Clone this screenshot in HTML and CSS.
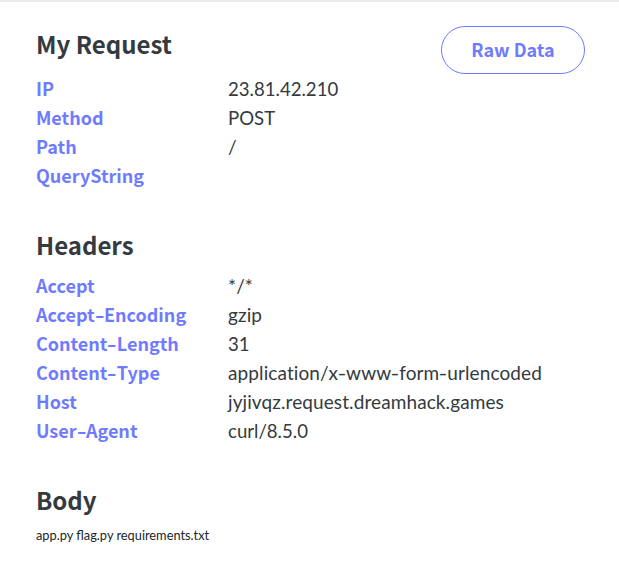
FILE: index.html
```html
<!DOCTYPE html>
<html lang="en">
<head>
    <meta charset="UTF-8">
    <meta name="viewport" content="width=device-width, initial-scale=1.0">
    <title>My Request</title>
    <link rel="stylesheet" href="styles.css">
</head>
<body>
    <div class="container">
        <div class="section-head">
            <h2>My Request</h2>
            <button class="raw-btn">Raw Data</button>
        </div>
        <div class="rows first">
            <div class="key">IP</div><div class="val tight">23.81.42.210</div>
            <div class="key">Method</div><div class="val tight">POST</div>
            <div class="key">Path</div><div class="val">/</div>
            <div class="key">QueryString</div><div class="val"></div>
        </div>

        <h2 class="gap-top">Headers</h2>
        <div class="rows">
            <div class="key">Accept</div><div class="val">*/*</div>
            <div class="key">Accept<span class="dash">-</span>Encoding</div><div class="val">gzip</div>
            <div class="key">Content<span class="dash">-</span>Length</div><div class="val tight">31</div>
            <div class="key">Content<span class="dash">-</span>Type</div><div class="val">application/x<span class="dash">-</span>www<span class="dash">-</span>form<span class="dash">-</span>urlencoded</div>
            <div class="key">Host</div><div class="val">jyjivqz.request.dreamhack.games</div>
            <div class="key">User<span class="dash">-</span>Agent</div><div class="val tight">curl/8.5.0</div>
        </div>

        <h2 class="gap-top">Body</h2>
        <pre class="body-text">app.py flag.py requirements.txt</pre>
    </div>
</body>
</html>
```

FILE: styles.css
```css
* {
    margin: 0;
    padding: 0;
    box-sizing: border-box;
}

body {
    background-color: #fff;
    border-top: 2px solid #e9ecef;
    font-family: "Noto Sans CJK KR", "Noto Sans", sans-serif;
    color: #343a40;
}

.container {
    padding: 24px 34px 0 36px;
}

.section-head {
    display: flex;
    justify-content: space-between;
    align-items: flex-start;
}

h2 {
    font-size: 24px;
    line-height: 36px;
    font-weight: 700;
    color: #343a40;
}

.gap-top {
    margin-top: 37px;
}

.raw-btn {
    width: 144px;
    height: 48px;
    padding-bottom: 2px;
    border: 1px solid #6f7bff;
    border-radius: 24px;
    background: #fff;
    color: #6f7bff;
    font-family: inherit;
    font-size: 18px;
    font-weight: 700;
}

.rows {
    display: grid;
    grid-template-columns: 192px 1fr;
    grid-auto-rows: 29px;
    margin-top: 8px;
}

.rows.first {
    margin-top: 0;
}

.key {
    font-size: 18px;
    line-height: 29px;
    font-weight: 700;
    color: #6f7bff;
}

.val {
    font-family: "Lato", sans-serif;
    font-size: 19px;
    line-height: 29px;
    letter-spacing: 0.1px;
    color: #343a40;
}

.val.tight {
    font-size: 18.6px;
    line-height: 30px;
    letter-spacing: 0;
}

/* the hyphen is drawn longer than these fonts have it */
.dash {
    display: inline-block;
    width: 9.4px;
    text-align: center;
    transform: scaleX(1.5);
}

.val .dash {
    width: 8px;
    transform: scaleX(1.25);
}

.body-text {
    margin-top: 8px;
    font-family: "Lato", sans-serif;
    font-size: 12.8px;
    line-height: 18px;
    color: #212529;
}
```
